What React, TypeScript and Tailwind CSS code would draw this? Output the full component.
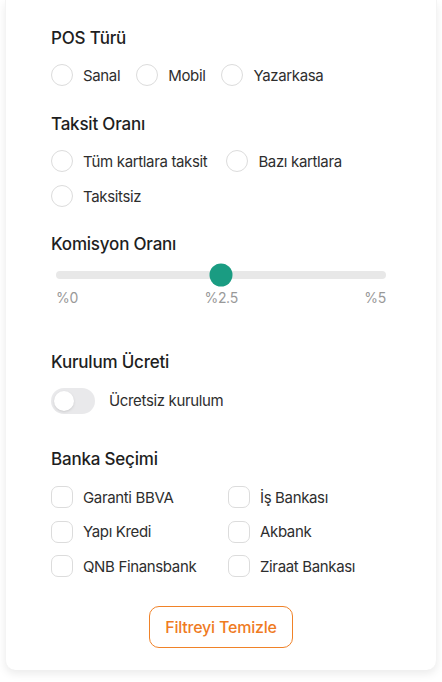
import React from "react";

function Radio({ label }: { label: string }) {
  return (
    <div className="flex items-center h-[22px]">
      <span className="w-[22px] h-[22px] rounded-full border border-[#dcdcdc] bg-white shrink-0" />
      <span className="ml-[10px] text-[15px] tracking-[-0.35px] text-[#2e2e2e] leading-none">{label}</span>
    </div>
  );
}

function Check({ label }: { label: string }) {
  return (
    <div className="flex items-center h-[22px]">
      <span className="w-[22px] h-[22px] rounded-[7px] border border-[#dcdcdc] bg-white shrink-0" />
      <span className="ml-[10px] text-[15px] tracking-[-0.35px] text-[#2e2e2e] leading-none">{label}</span>
    </div>
  );
}

function Heading({ children }: { children: React.ReactNode }) {
  return <h3 className="text-[17px] leading-7 font-medium tracking-[-0.2px] text-[#1e1e1e]">{children}</h3>;
}

export default function App() {
  return (
    <div className="min-h-[682px] bg-white pb-3" style={{ fontFamily: "Inter, 'Noto Sans', sans-serif" }}>
      <div className="mx-[5px] bg-white rounded-b-[10px] border-x border-[#f4f4f4] shadow-[0_4px_8px_rgba(0,0,0,0.08)] pl-[45px] pr-[45px] pt-6 pb-[22px]">
        <Heading>POS Türü</Heading>
        <div className="mt-3 flex items-center gap-4">
          <Radio label="Sanal" />
          <Radio label="Mobil" />
          <Radio label="Yazarkasa" />
        </div>

        <div className="mt-6">
          <Heading>Taksit Oranı</Heading>
        </div>
        <div className="mt-3 flex flex-col gap-[13px]">
          <div className="flex items-center gap-[19px]">
            <Radio label="Tüm kartlara taksit" />
            <Radio label="Bazı kartlara" />
          </div>
          <Radio label="Taksitsiz" />
        </div>

        <div className="mt-[23px]">
          <Heading>Komisyon Oranı</Heading>
        </div>
        <div className="mt-[6px] px-[5px]">
          <div className="relative h-[22px] flex items-center">
            <div className="w-full h-[8px] rounded-full bg-[#e8e8e8]" />
            <span className="absolute left-1/2 top-1/2 -translate-x-1/2 -translate-y-1/2 w-[23px] h-[23px] rounded-full bg-[#1a9c82]" />
          </div>
          <div className="mt-[2px] flex justify-between text-[14px] leading-5 tracking-[-0.3px] text-[#999999]">
            <span>%0</span>
            <span>%2.5</span>
            <span>%5</span>
          </div>
        </div>

        <div className="mt-10">
          <Heading>Kurulum Ücreti</Heading>
        </div>
        <div className="mt-3 flex items-center">
          <span className="w-[44px] h-[26px] rounded-full bg-[#e9e9eb] p-[3px] flex items-center">
            <span className="w-[20px] h-[20px] rounded-full bg-white shadow-sm" />
          </span>
          <span className="ml-[14px] text-[15px] tracking-[-0.35px] text-[#2e2e2e]">Ücretsiz kurulum</span>
        </div>

        <div className="mt-[31px]">
          <Heading>Banka Seçimi</Heading>
        </div>
        <div className="mt-[13px] grid grid-cols-[177px_1fr] gap-y-[12.5px]">
          <Check label="Garanti BBVA" />
          <Check label="İş Bankası" />
          <Check label="Yapı Kredi" />
          <Check label="Akbank" />
          <Check label="QNB Finansbank" />
          <Check label="Ziraat Bankası" />
        </div>

        <div className="mt-[29px] flex justify-center">
          <button className="h-[42px] w-[144px] rounded-[10px] border border-[#f08228] text-[#ef7b1f] text-[16px] font-medium tracking-[-0.2px]">
            Filtreyi Temizle
          </button>
        </div>
      </div>
    </div>
  );
}
